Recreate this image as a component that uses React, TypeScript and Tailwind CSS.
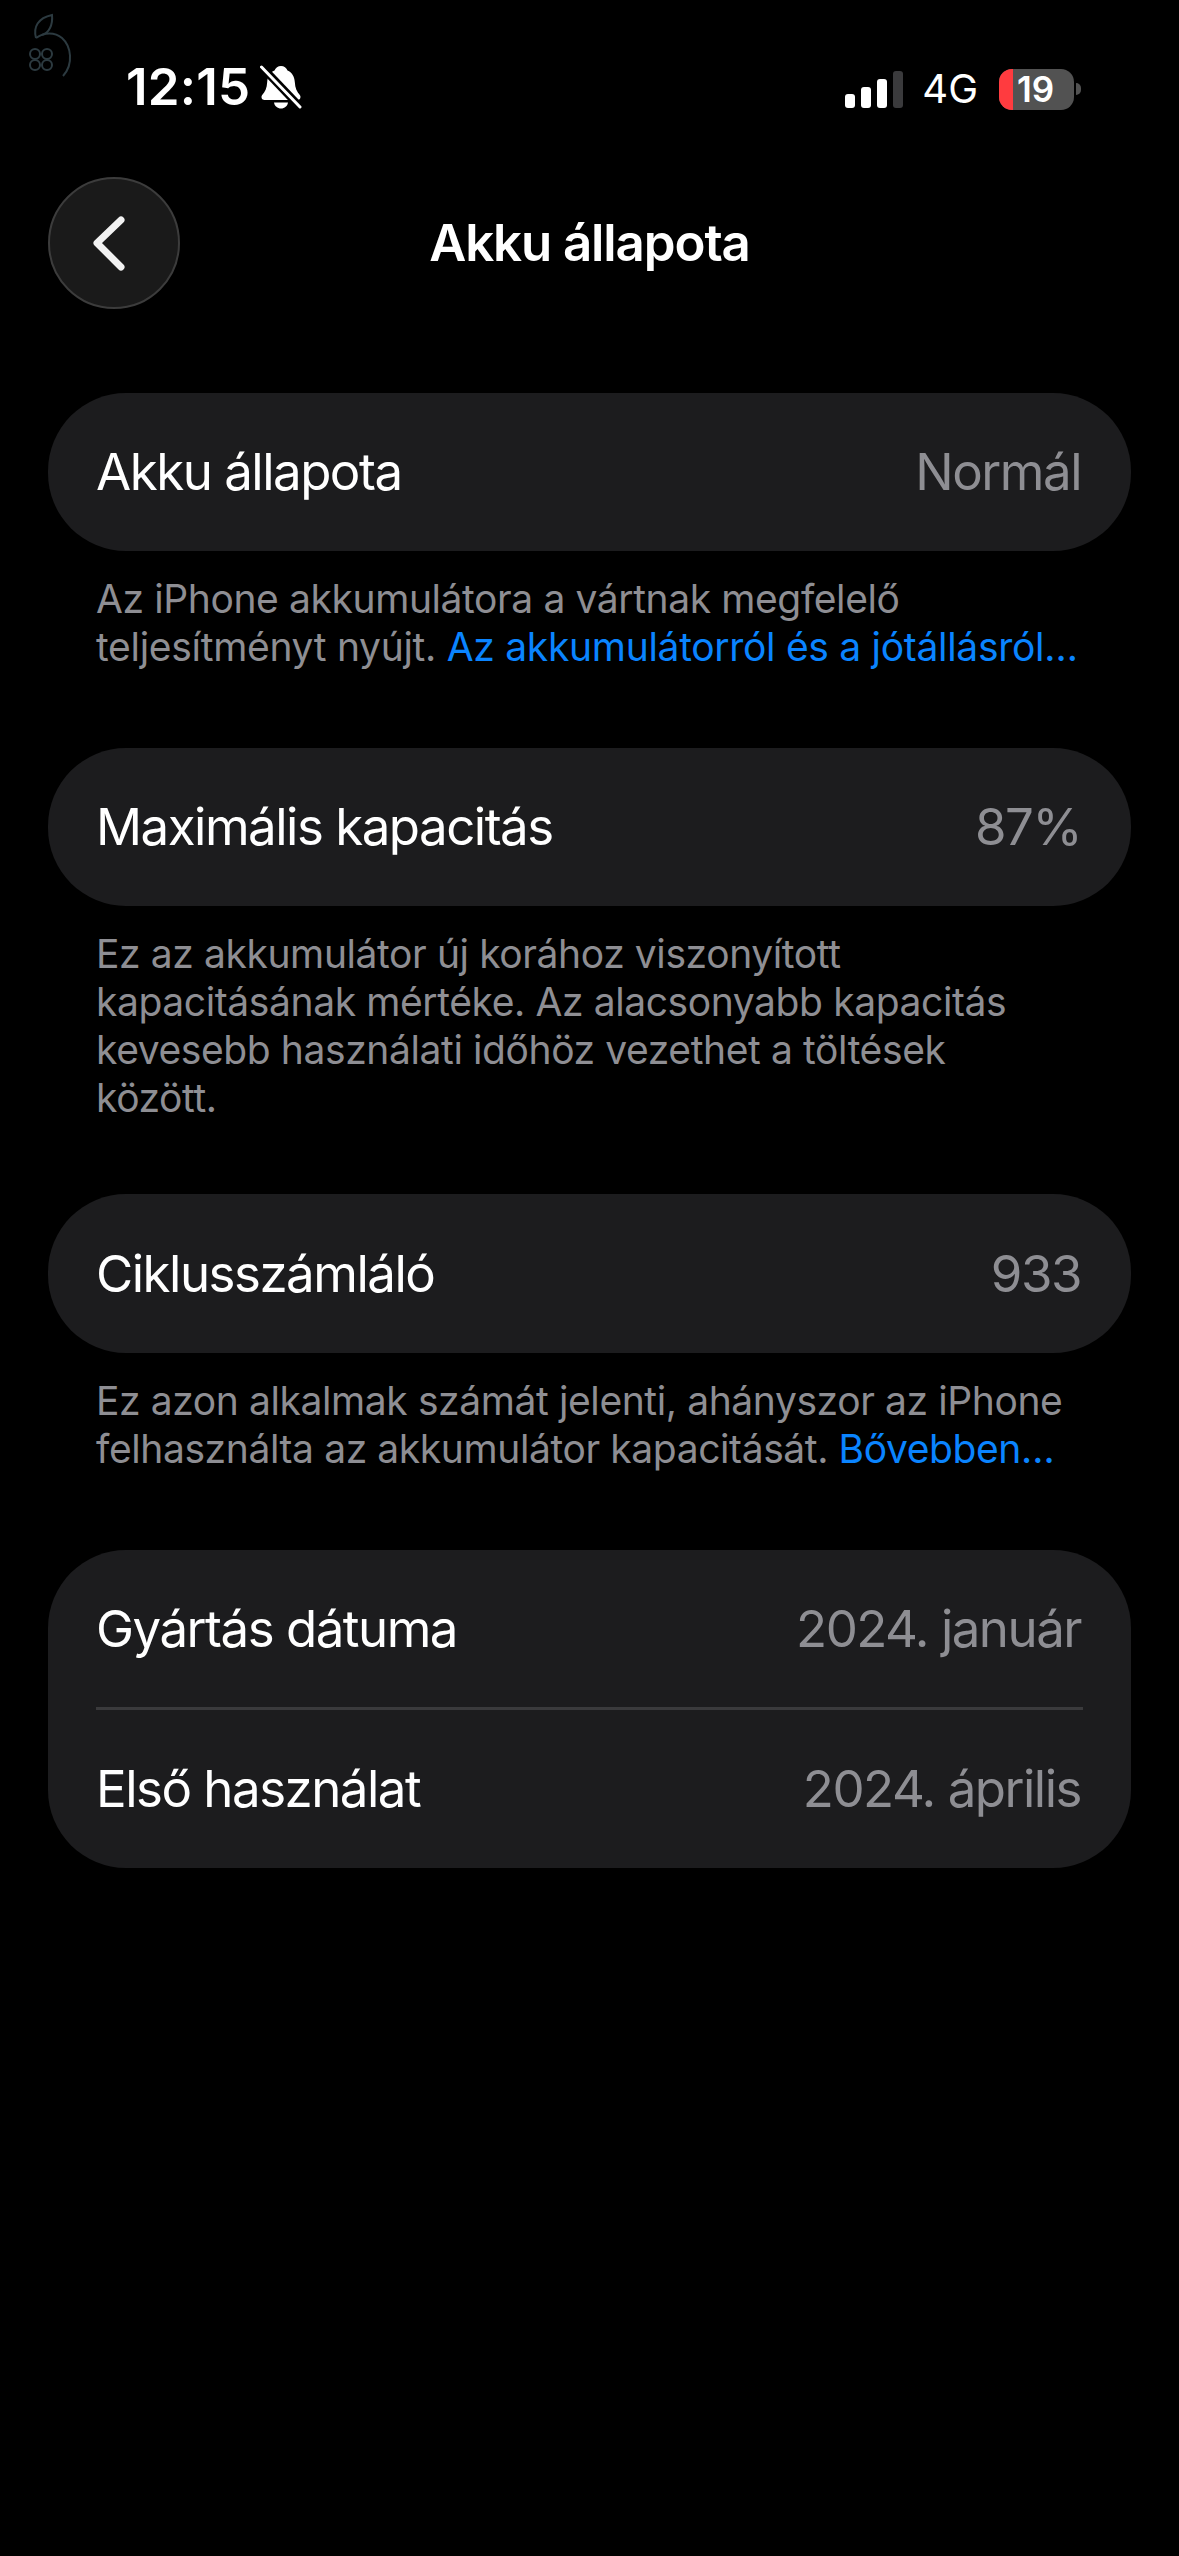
import React from "react";

const Row: React.FC<{ label: string; value: string; height: string }> = ({ label, value, height }) => (
  <div className={`flex items-center justify-between ${height}`}>
    <span className="text-[51px] leading-[60px] tracking-[-1.5px] text-white">{label}</span>
    <span className="pr-[2px] text-[51px] leading-[60px] tracking-[-1.5px] text-[#8e8e93]">{value}</span>
  </div>
);

const Note: React.FC<{ children: React.ReactNode }> = ({ children }) => (
  <p className="mt-[24px] px-[96px] text-[39px] leading-[48px] tracking-[-0.4px] whitespace-nowrap text-[#8e8e93]">
    {children}
  </p>
);

const Link: React.FC<{ children: React.ReactNode }> = ({ children }) => (
  <span className="text-[#0a84ff]">{children}</span>
);

const Logo = () => (
  <svg viewBox="0 0 80 90" className="absolute top-0 left-0 h-[90px] w-[80px]" fill="none" stroke="#2c3a40" strokeWidth="2">
    <path d="M36 38c-3-11 2-20 16-23 1 10-3 18-10 20" />
    <path d="M36 38c8-6 19-6 26 0 9 8 12 26 1 38" />
    <circle cx="35" cy="54" r="5" />
    <circle cx="47" cy="54" r="5" />
    <circle cx="35" cy="65" r="5" />
    <circle cx="47" cy="65" r="5" />
  </svg>
);

const BellOff = () => (
  <svg viewBox="0 0 42 44" className="ml-[10px] h-[44px] w-[42px]" fill="#fff">
    <path d="M21 1c3 0 5.500 2 6.500 4.500 4.500 2 7 6 7.300 11.500.3 6 2.200 10 5 13 1.500 1.800.5 5-2.300 5H4.500c-2.800 0-3.800-3.200-2.300-5 2.800-3 4.700-7 5-13C7.500 11.500 10 7.500 14.500 5.500 15.500 3 18 1 21 1z" />
    <path d="M14 37.500h14c-.5 3.500-3.500 6-7 6s-6.500-2.500-7-6z" />
    <path d="M0 0 41 43" stroke="#000" strokeWidth="8" />
    <path d="M1.500 2 40 42" stroke="#fff" strokeWidth="3" strokeLinecap="round" />
  </svg>
);

export default function App() {
  return (
    <div className="relative min-h-[2556px] w-[1179px] bg-black font-['Inter',sans-serif] text-white">
      <Logo />

      {/* status bar */}
      <div className="flex h-[177px] items-start justify-between pt-[64px] pr-[98px] pl-[126px]">
        <div className="flex items-center">
          <span className="text-[51px] leading-[46px] font-semibold tracking-[0.2px]">12:15</span>
          <BellOff />
        </div>
        <div className="flex items-center pt-[2px]">
          <div className="flex items-end gap-[6px]">
            <div className="h-[14px] w-[10px] rounded-[3px] bg-white" />
            <div className="h-[21px] w-[10px] rounded-[3px] bg-white" />
            <div className="h-[29px] w-[10px] rounded-[3px] bg-white" />
            <div className="h-[37px] w-[10px] rounded-[3px] bg-[#3a3a3c]" />
          </div>
          <span className="ml-[19px] text-[40px] leading-[46px]">4G</span>
          <div className="ml-[21px] flex h-[41px] w-[75px] overflow-hidden rounded-[13px] bg-[#525252]">
            <div className="h-full w-[14px] bg-[#ff3b3f]" />
            <span className="ml-[4px] text-[35px] leading-[41px] font-semibold">19</span>
          </div>
          <div className="ml-[2px] h-[12px] w-[5px] rounded-r-[5px] bg-[#525252]" />
        </div>
      </div>

      {/* nav */}
      <div className="relative flex h-[132px] items-center justify-center">
        <div className="absolute left-[48px] flex h-[132px] w-[132px] items-center justify-center rounded-full border-[2px] border-[#3c3c3c] bg-[#1a1a1a]">
          <svg viewBox="0 0 40 60" className="mr-[12px] h-[60px] w-[40px]" fill="none" stroke="#f2f2f2" strokeWidth="7" strokeLinecap="round" strokeLinejoin="round">
            <path d="M33 7 9 30l24 24" />
          </svg>
        </div>
        <span className="text-[51px] leading-[60px] font-semibold tracking-[-1.1px]">Akku állapota</span>
      </div>

      {/* content */}
      <div className="pt-[84px]">
        <div className="mx-[48px] rounded-[78px] bg-[#1c1c1e] px-[48px]">
          <Row label="Akku állapota" value="Normál" height="h-[158px]" />
        </div>
        <Note>
          Az iPhone akkumulátora a vártnak megfelelő
          <br />
          <span className="tracking-[-0.3px]">
            teljesítményt nyújt. <Link>Az akkumulátorról és a jótállásról…</Link>
          </span>
        </Note>

        <div className="mx-[48px] mt-[77px] rounded-[78px] bg-[#1c1c1e] px-[48px]">
          <Row label="Maximális kapacitás" value="87%" height="h-[158px]" />
        </div>
        <Note>
          Ez az akkumulátor új korához viszonyított
          <br />
          kapacitásának mértéke. Az alacsonyabb kapacitás
          <br />
          kevesebb használati időhöz vezethet a töltések
          <br />
          között.
        </Note>

        <div className="mx-[48px] mt-[72px] rounded-[78px] bg-[#1c1c1e] px-[48px]">
          <Row label="Ciklusszámláló" value="933" height="h-[159px]" />
        </div>
        <Note>
          Ez azon alkalmak számát jelenti, ahányszor az iPhone
          <br />
          felhasználta az akkumulátor kapacitását. <Link>Bővebben…</Link>
        </Note>

        <div className="mx-[48px] mt-[77px] rounded-[78px] bg-[#1c1c1e] px-[48px]">
          <Row label="Gyártás dátuma" value="2024. január" height="h-[157px]" />
          <div className="h-[3px] bg-[#3a3a3c]" />
          <Row label="Első használat" value="2024. április" height="h-[158px]" />
        </div>
      </div>
    </div>
  );
}
